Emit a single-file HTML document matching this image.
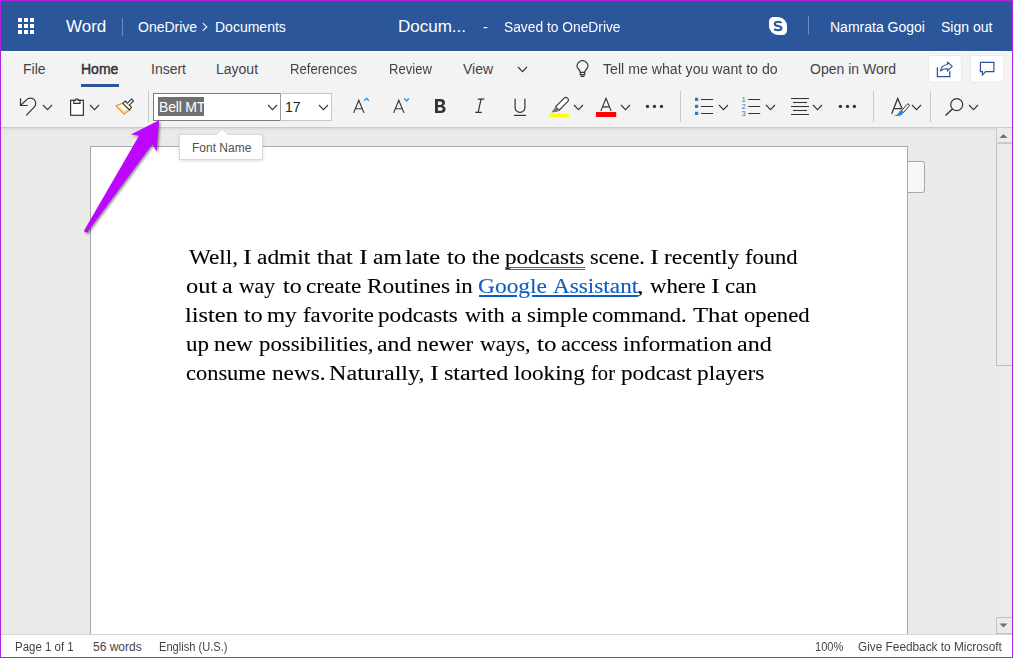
<!DOCTYPE html>
<html><head><meta charset="utf-8">
<style>
*{margin:0;padding:0;box-sizing:border-box}
html,body{width:1013px;height:658px;overflow:hidden;background:#ae24d9}
body{position:relative;font-family:"Liberation Sans",sans-serif}
.a{position:absolute;white-space:nowrap}
#hdr{left:1px;top:1px;width:1011px;height:50px;background:#2b579a}
#rib{left:1px;top:51px;width:1011px;height:76px;background:#f3f3f3;border-top:1px solid #fbfbfb}
#canvas{left:1px;top:127px;width:995px;height:507px;background:#ebeae8}
#page{left:90px;top:146px;width:818px;height:490px;background:#fff;border:1px solid #a8a8a8}
#status{left:1px;top:634px;width:1011px;height:23px;background:#fff;border-top:1px solid #d6d6d6}
.ht{color:#fff;font-size:14px}
.tab{color:#444;font-size:14px;top:61px}
.st{color:#444;font-size:12px;top:640px}
.doc{font-family:"Liberation Serif",serif;font-size:22.7px;color:#111;left:187px}
.w{position:absolute;white-space:nowrap;font-family:"Liberation Serif",serif;font-size:22px;color:#000;-webkit-text-stroke-width:0.12px;transform-origin:0 0}
</style></head><body>
<div class="a" id="hdr"></div>
<div class="a" id="rib"></div>
<div class="a" id="canvas"></div>
<div class="a" id="page"></div>
<div class="a" id="status"></div>

<!-- header -->
<svg class="a" style="left:18px;top:18px" width="17" height="17"><g fill="#fff">
<rect x="0" y="0" width="4" height="4"/><rect x="6" y="0" width="4" height="4"/><rect x="12" y="0" width="4" height="4"/>
<rect x="0" y="6" width="4" height="4"/><rect x="6" y="6" width="4" height="4"/><rect x="12" y="6" width="4" height="4"/>
<rect x="0" y="12" width="4" height="4"/><rect x="6" y="12" width="4" height="4"/><rect x="12" y="12" width="4" height="4"/>
</g></svg>
<div class="a ht" style="left:66px;top:17px;font-size:17px">Word</div>
<div class="a" style="left:122px;top:18px;width:1px;height:18px;background:#6a8cc0"></div>
<div class="a ht" style="left:138px;top:19px">OneDrive</div>
<svg class="a" style="left:201px;top:22px" width="8" height="10"><path d="M1.8,1.2L5.8,4.9L1.8,8.6" fill="none" stroke="#fff" stroke-width="1.1"/></svg>
<div class="a ht" style="left:215px;top:19px">Documents</div>
<div class="a ht" style="left:398px;top:17px;font-size:17px">Docum...</div>
<div class="a ht" style="left:483px;top:19px">-</div>
<div class="a ht" style="left:504px;top:19px;transform:scaleX(0.985);transform-origin:0 0">Saved to OneDrive</div>
<svg class="a" style="left:768px;top:16px" width="20" height="20"><path d="M1,5.5A4.5,4.5 0 0 1 5.5,1H10A9,9 0 0 1 19,10V14.5A4.5,4.5 0 0 1 14.5,19H10A9,9 0 0 1 1,10Z" fill="#fff"/><path d="M13.6,6.9C12.8,6 11.6,5.7 10.1,5.7C7.9,5.7 6.7,6.7 6.7,7.9C6.7,10.8 13.5,9.3 13.5,12.1C13.5,13.4 12.2,14.3 10,14.3C8.3,14.3 7,13.8 6.2,12.8" fill="none" stroke="#2b579a" stroke-width="2.1"/></svg>
<div class="a" style="left:808px;top:16px;width:1px;height:19px;background:#6a8cc0"></div>
<div class="a ht" style="left:830px;top:19px">Namrata Gogoi</div>
<div class="a ht" style="left:941px;top:19px">Sign out</div>

<!-- tabs -->
<div class="a tab" style="left:23px">File</div>
<div class="a tab" style="left:81px;color:#333;-webkit-text-stroke:0.45px #333">Home</div>
<div class="a" style="left:81px;top:84px;width:38px;height:3px;background:#2b579a"></div>
<div class="a tab" style="left:151px">Insert</div>
<div class="a tab" style="left:216px">Layout</div>
<div class="a tab" style="left:290px;transform:scaleX(0.937);transform-origin:0 0">References</div>
<div class="a tab" style="left:389px;transform:scaleX(0.935);transform-origin:0 0">Review</div>
<div class="a tab" style="left:463px">View</div>
<div class="a tab" style="left:603px;transform:scaleX(1.011);transform-origin:0 0">Tell me what you want to do</div>
<div class="a tab" style="left:810px">Open in Word</div>


<!-- font boxes -->
<div class="a" style="left:153px;top:93px;width:128px;height:28px;background:#fff;border:1px solid #7a7a7a"></div>
<div class="a" style="left:280px;top:93px;width:52px;height:28px;background:#fff;border:1px solid #c6c6c6;border-left:1px solid #9a9a9a"></div>
<div class="a" style="left:158px;top:97px;width:46px;height:19px;background:#707070"></div>
<div class="a" style="left:159px;top:99px;color:#fff;font-size:14px;letter-spacing:-0.2px">Bell MT</div>
<div class="a" style="left:285px;top:99px;color:#222;font-size:14px">17</div>
<!-- ribbon icons overlay -->
<svg class="a" style="left:0;top:0" width="1013" height="658" viewBox="0 0 1013 658">
<g fill="none" stroke="#333" stroke-width="1.2">
 <!-- undo -->
 <path d="M20.5,98.2V105.5H27.7"/>
 <path d="M20.5,105.5L26.65,99.65A5.3,5.3 0 0 1 34.15,107.15L26.3,115.3"/>
 <!-- chevrons -->
 <path d="M43,105L47.5,109.7L52,105" stroke-width="1.1"/>
 <path d="M90,105L94.5,109.7L99,105" stroke-width="1.1"/>
 <path d="M268,105L272.5,109.7L277,105" stroke-width="1.1"/>
 <path d="M319,105L323.5,109.7L328,105" stroke-width="1.1"/>
 <path d="M574,105L578.5,109.7L583,105" stroke-width="1.1"/>
 <path d="M621,105L625.5,109.7L630,105" stroke-width="1.1"/>
 <path d="M719,105L723.5,109.7L728,105" stroke-width="1.1"/>
 <path d="M766,105L770.5,109.7L775,105" stroke-width="1.1"/>
 <path d="M813,105L817.5,109.7L822,105" stroke-width="1.1"/>
 <path d="M912,105L916.5,109.7L921,105" stroke-width="1.1"/>
 <path d="M969,105L973.5,109.7L978,105" stroke-width="1.1"/>
 <path d="M518,67L522.5,71.7L527,67" stroke-width="1.1"/>
 <!-- clipboard -->
 <rect x="70.6" y="100.3" width="12.8" height="15" fill="#fff"/>
 <path d="M73.8,103.3H80V100.3H78.3A1.4,1.4 0 0 0 75.5,100.3H73.8Z" fill="#fff"/>
 <!-- lightbulb -->
 <path d="M580.3,72.3C580.3,70 577,68.5 577,66.2A5.5,5.5 0 0 1 588,66.2C588,68.5 584.7,70 584.7,72.3Z"/>
 <path d="M580.3,72.5V74.6H584.7V72.5M580.5,76.4H584.5"/>
 <!-- search -->
 <circle cx="956.7" cy="104.6" r="6"/>
 <path d="M952.4,108.9L945.5,115.6" stroke-width="1.4"/>
</g>
<!-- format painter -->
<g>
 <path d="M115.8,105.8L122.8,103.3L129.5,109.8L124.3,114.2Z" fill="#fbe0bf" stroke="#e8912d" stroke-width="1.1" stroke-linejoin="round"/>
 <path d="M118.5,106L122.5,104.6L126.5,108.4L124.5,110.2Z" fill="#fff"/>
 <path d="M122.8,103.3L125.3,101L131.4,107.3L129.5,109.8Z" fill="#fff" stroke="#333" stroke-width="1.1"/>
 <path d="M127.2,103.4L131.6,99.1L133.5,101L129.1,105.3" fill="#fff" stroke="#333" stroke-width="1.1"/>
</g>
<!-- separators -->
<g fill="#c8c8c8">
 <rect x="148" y="91" width="1" height="31"/>
 <rect x="680" y="91" width="1" height="31"/>
 <rect x="873" y="91" width="1" height="31"/>
 <rect x="930" y="91" width="1" height="31"/>
</g>
<!-- font inc/dec -->
<g fill="none" stroke="#333" stroke-width="1.15">
 <path d="M353.6,112.9L358.8,100.2L364,112.9M355.4,108.7H362.2"/>
 <path d="M393.6,112.9L398.8,100.2L404,112.9M395.4,108.7H402.2"/>
</g>
<g fill="none" stroke="#1e88e5" stroke-width="1.2">
 <path d="M364.3,100.8L366.6,98.2L368.9,100.8"/>
 <path d="M404.3,98.4L406.6,101L408.9,98.4"/>
</g>
<!-- B I U -->
<path fill-rule="evenodd" fill="#333" d="M435,99H440.6C443.6,99 445,100.6 445,102.7C445,104.3 444,105.4 442.6,105.8C444.5,106.2 445.6,107.5 445.6,109.3C445.6,111.6 443.8,113 440.8,113H435ZM437.9,101.4V105H440C441.5,105 442.2,104.3 442.2,103.1C442.2,101.9 441.4,101.4 440,101.4ZM437.9,107.2V110.7H440.4C441.9,110.7 442.7,110 442.7,108.9C442.7,107.8 441.8,107.2 440.3,107.2Z"/>
<g fill="none" stroke="#333" stroke-width="1.2">
 <path d="M477.8,99.2H484.3M475.3,112.4H481.8M481.1,99.2L478.1,112.4"/>
 <path d="M515.1,98.8V107.4A4.9,4.9 0 0 0 524.9,107.4V98.8"/>
 <path d="M514,115.4H526"/>
</g>
<!-- highlighter -->
<rect x="549" y="113.7" width="20" height="3.4" fill="#ffff00"/>
<g stroke="#333" stroke-width="1.1" fill="#fff">
 <path d="M555.7,106.6L564.4,97.9A1.9,1.9 0 0 1 567.1,97.9L567.9,98.7A1.9,1.9 0 0 1 567.9,101.4L559.2,110.1Z"/>
</g>
<path d="M555.7,106.6L559.2,110.1L557.5,111.8L551.3,112.4Z" fill="#777"/>
<!-- font color -->
<path d="M600.8,111.1L606,98.3L611.2,111.1M602.6,106.8H609.4" fill="none" stroke="#333" stroke-width="1.15"/>
<rect x="596" y="112" width="20.2" height="5" fill="#ff0000"/>
<!-- dots -->
<g fill="#333">
 <circle cx="647.5" cy="106.4" r="1.7"/><circle cx="654.5" cy="106.4" r="1.7"/><circle cx="661.5" cy="106.4" r="1.7"/>
 <circle cx="840.4" cy="106.4" r="1.7"/><circle cx="847.5" cy="106.4" r="1.7"/><circle cx="854.4" cy="106.4" r="1.7"/>
</g>
<!-- bullets -->
<g fill="#1a7fd6">
 <rect x="695" y="97.7" width="3.2" height="3.2"/><rect x="695" y="104.8" width="3.2" height="3.2"/><rect x="695" y="111.8" width="3.2" height="3.2"/>
</g>
<g stroke="#333" stroke-width="1.1">
 <path d="M701,99.5H713.2M701,106.5H713.2M701,113.5H713.2" stroke-width="1"/>
 <path d="M748.2,99.5H760.2M748.2,106.5H760.2M748.2,113.5H760.2" stroke-width="1"/>
 <path d="M791,98.5H809M793,102.5H807M791,106.5H809M793,110.5H807M791,114.5H809" stroke-width="1"/>
</g>
<g font-family="Liberation Sans" font-size="7.5" fill="#1a7fd6" text-anchor="middle">
 <text x="743.5" y="102.2">1</text><text x="743.5" y="109.2">2</text><text x="743.5" y="116.2">3</text>
</g>
<!-- styles -->
<path d="M891.7,113.8L897.7,98.4L902,108.6M894.4,108.6H902" fill="none" stroke="#333" stroke-width="1.25"/>
<path d="M901.6,110.6L907,104.4A1.3,1.3 0 0 1 909,106.1L903.6,112.4Z" fill="#fff" stroke="#333" stroke-width="1"/>
<path d="M893,115.6C896.8,115.6 898.6,113.6 899.3,111.4C900.3,109.8 903,110.4 903.4,112.2C903,115 899,117 893,115.6Z" fill="#2a86dc"/>
<!-- share / comment -->
<rect x="928.5" y="55.5" width="32.8" height="26.5" rx="2" fill="#fff" stroke="#e6e6e6" stroke-width="0.8"/>
<rect x="970.5" y="55.5" width="32.8" height="26.5" rx="2" fill="#fff" stroke="#e6e6e6" stroke-width="0.8"/>
<g fill="none" stroke="#2b579a" stroke-width="1.3">
 <path d="M937.4,67.2V76.6H949.8V71.3"/>
 <path d="M947.4,62L952.3,66.4L947.3,71V68.6C944.5,68.6 942,69.5 940.4,71C941,67.5 943.8,64.8 947.4,64.4Z" stroke-width="1.05" stroke-linejoin="round"/>
 <path d="M980.4,62.3H993.9V71.6H985.6L982.4,75V71.6H980.4Z" stroke-width="1.2"/>
</g>
</svg>


<!-- ribbon shadow -->
<div class="a" style="left:1px;top:127px;width:1011px;height:1px;background:#c9c9c9"></div>
<div class="a" style="left:1px;top:128px;width:995px;height:3px;background:linear-gradient(#d9d8d7,#ebeae8)"></div>
<!-- page side tab -->
<div class="a" style="left:908px;top:161px;width:17px;height:32px;background:#f7f7f7;border:1px solid #a8a8a8;border-left:none;border-radius:0 3px 3px 0"></div>
<!-- scrollbar -->
<div class="a" style="left:996px;top:128px;width:16px;height:506px;background:#ecebe9"></div>
<div class="a" style="left:996px;top:128px;width:16px;height:16px;border-left:1px solid #c8ccd0;border-bottom:2px solid #c8ccd0"></div>
<div class="a" style="left:996px;top:144px;width:16px;height:222px;border-left:1px solid #b8bec4;border-bottom:1px solid #b8bec4"></div>
<div class="a" style="left:996px;top:617px;width:16px;height:17px;border:1px solid #c0c4c8;border-right:none"></div>
<svg class="a" style="left:996px;top:127px" width="16" height="507">
 <path d="M3.5,11L7.5,7L11.5,11Z" fill="#707070"/>
 <path d="M3.5,496.5L7.5,500.5L11.5,496.5Z" fill="#707070"/>
</svg>
<!-- tooltip -->
<div class="a" style="left:179px;top:134px;width:84px;height:26px;background:#fff;border:1px solid #d9d9d9;box-shadow:0 1px 3px rgba(0,0,0,0.13)"></div>
<svg class="a" style="left:214px;top:128px" width="16" height="8"><path d="M1,7.5L8,1L15,7.5" fill="#fff" stroke="#d6d6d6" stroke-width="1"/><rect x="0" y="7" width="16" height="2" fill="#fff"/></svg>
<div class="a" style="left:192px;top:141px;color:#505050;font-size:12px">Font Name</div>
<!-- purple arrow -->
<svg class="a" style="left:0;top:0" width="300" height="300">
 <defs><filter id="sh" x="-30%" y="-30%" width="160%" height="160%"><feGaussianBlur stdDeviation="1.3"/></filter></defs>
 <path d="M84,230.8L139.1,135.4L130.9,134.5L159.1,120.2L156.7,151.5L152.4,144.2L88.3,231C87.4,233 85,233.1 84,230.8Z" fill="#000" opacity="0.4" filter="url(#sh)" transform="translate(1.5,1.5)"/>
 <path d="M84,230.8L139.1,135.4L130.9,134.5L159.1,120.2L156.7,151.5L152.4,144.2L88.3,231C87.4,233 85,233.1 84,230.8Z" fill="#bd06fd"/>
</svg>

<!-- doc text -->
<span class="w" style="left:188.50px;top:244px;transform:scaleX(1.0533)">Well,</span>
<span class="w" style="left:242.60px;top:244px;transform:scaleX(1.2000)">I</span>
<span class="w" style="left:256.93px;top:244px;transform:scaleX(1.0653)">admit</span>
<span class="w" style="left:317.10px;top:244px;transform:scaleX(1.0788)">that</span>
<span class="w" style="left:358.60px;top:244px;transform:scaleX(1.2000)">I</span>
<span class="w" style="left:372.93px;top:244px;transform:scaleX(1.0720)">am</span>
<span class="w" style="left:405.39px;top:244px;transform:scaleX(1.1067)">late</span>
<span class="w" style="left:446.80px;top:244px;transform:scaleX(1.1125)">to</span>
<span class="w" style="left:471.80px;top:244px;transform:scaleX(1.0346)">the</span>
<span class="w" style="left:504.75px;top:244px;transform:scaleX(1.0459)">podcasts</span>
<span class="w" style="left:589.99px;top:244px;transform:scaleX(1.0096)">scene.</span>
<span class="w" style="left:649.80px;top:244px;transform:scaleX(1.2000)">I</span>
<span class="w" style="left:663.74px;top:244px;transform:scaleX(1.0629)">recently</span>
<span class="w" style="left:745.27px;top:244px;transform:scaleX(1.0260)">found</span>
<span class="w" style="left:185.89px;top:273px;transform:scaleX(1.1111)">out</span>
<span class="w" style="left:222.21px;top:273px;transform:scaleX(1.0875)">a</span>
<span class="w" style="left:239.10px;top:273px;transform:scaleX(0.9811)">way</span>
<span class="w" style="left:282.50px;top:273px;transform:scaleX(1.0875)">to</span>
<span class="w" style="left:306.05px;top:273px;transform:scaleX(1.0529)">create</span>
<span class="w" style="left:366.54px;top:273px;transform:scaleX(1.0610)">Routines</span>
<span class="w" style="left:454.76px;top:273px;transform:scaleX(1.0375)">in</span>
<span class="w" style="left:478.43px;top:273px;transform:scaleX(1.0651);color:#0b5ec6">Google</span>
<span class="w" style="left:552.90px;top:273px;transform:scaleX(1.0562);color:#0b5ec6">Assistant</span>
<span class="w" style="left:637.00px;top:273px;transform:scaleX(1.2000)">,</span>
<span class="w" style="left:650.40px;top:273px;transform:scaleX(1.0340)">where</span>
<span class="w" style="left:710.50px;top:273px;transform:scaleX(1.2000)">I</span>
<span class="w" style="left:724.86px;top:273px;transform:scaleX(1.0414)">can</span>
<span class="w" style="left:185.39px;top:302px;transform:scaleX(1.1087)">listen</span>
<span class="w" style="left:243.80px;top:302px;transform:scaleX(1.0875)">to</span>
<span class="w" style="left:267.25px;top:302px;transform:scaleX(1.0519)">my</span>
<span class="w" style="left:302.66px;top:302px;transform:scaleX(1.0373)">favorite</span>
<span class="w" style="left:378.45px;top:302px;transform:scaleX(1.0527)">podcasts</span>
<span class="w" style="left:465.30px;top:302px;transform:scaleX(1.0128)">with</span>
<span class="w" style="left:510.81px;top:302px;transform:scaleX(1.0875)">a</span>
<span class="w" style="left:526.66px;top:302px;transform:scaleX(1.0386)">simple</span>
<span class="w" style="left:591.87px;top:302px;transform:scaleX(1.0267)">command.</span>
<span class="w" style="left:693.20px;top:302px;transform:scaleX(1.1175)">That</span>
<span class="w" style="left:743.77px;top:302px;transform:scaleX(1.0323)">opened</span>
<span class="w" style="left:186.36px;top:331px;transform:scaleX(1.0450)">up</span>
<span class="w" style="left:214.34px;top:331px;transform:scaleX(1.0600)">new</span>
<span class="w" style="left:258.56px;top:331px;transform:scaleX(1.0352)">possibilities,</span>
<span class="w" style="left:377.12px;top:331px;transform:scaleX(1.0800)">and</span>
<span class="w" style="left:416.66px;top:331px;transform:scaleX(1.0434)">newer</span>
<span class="w" style="left:480.30px;top:331px;transform:scaleX(0.9940)">ways,</span>
<span class="w" style="left:537.10px;top:331px;transform:scaleX(1.1375)">to</span>
<span class="w" style="left:560.59px;top:331px;transform:scaleX(1.0093)">access</span>
<span class="w" style="left:622.65px;top:331px;transform:scaleX(1.0529)">information</span>
<span class="w" style="left:736.81px;top:331px;transform:scaleX(1.0900)">and</span>
<span class="w" style="left:186.38px;top:360px;transform:scaleX(1.0195)">consume</span>
<span class="w" style="left:271.95px;top:360px;transform:scaleX(1.0542)">news.</span>
<span class="w" style="left:329.40px;top:360px;transform:scaleX(1.0965)">Naturally,</span>
<span class="w" style="left:429.60px;top:360px;transform:scaleX(1.2000)">I</span>
<span class="w" style="left:444.41px;top:360px;transform:scaleX(1.0947)">started</span>
<span class="w" style="left:513.95px;top:360px;transform:scaleX(1.0530)">looking</span>
<span class="w" style="left:590.66px;top:360px;transform:scaleX(0.9360)">for</span>
<span class="w" style="left:621.45px;top:360px;transform:scaleX(1.0530)">podcast</span>
<span class="w" style="left:697.44px;top:360px;transform:scaleX(1.0597)">players</span>
<div class="a" style="left:505px;top:267px;width:80px;height:1px;background:#3a5ae8"></div>
<div class="a" style="left:505px;top:269px;width:80px;height:1px;background:#3a5ae8"></div>
<div class="a" style="left:479px;top:295px;width:38px;height:2px;background:#0b5ec6"></div>
<div class="a" style="left:532px;top:295px;width:106px;height:2px;background:#0b5ec6"></div>

<!-- status -->
<div class="a st" style="left:15px;transform:scaleX(0.955);transform-origin:0 0">Page 1 of 1</div>
<div class="a st" style="left:93px">56 words</div>
<div class="a st" style="left:159px;transform:scaleX(0.925);transform-origin:0 0">English (U.S.)</div>
<div class="a st" style="left:815px;transform:scaleX(0.92);transform-origin:0 0">100%</div>
<div class="a st" style="left:858px;transform:scaleX(0.985);transform-origin:0 0">Give Feedback to Microsoft</div>
</body></html>
